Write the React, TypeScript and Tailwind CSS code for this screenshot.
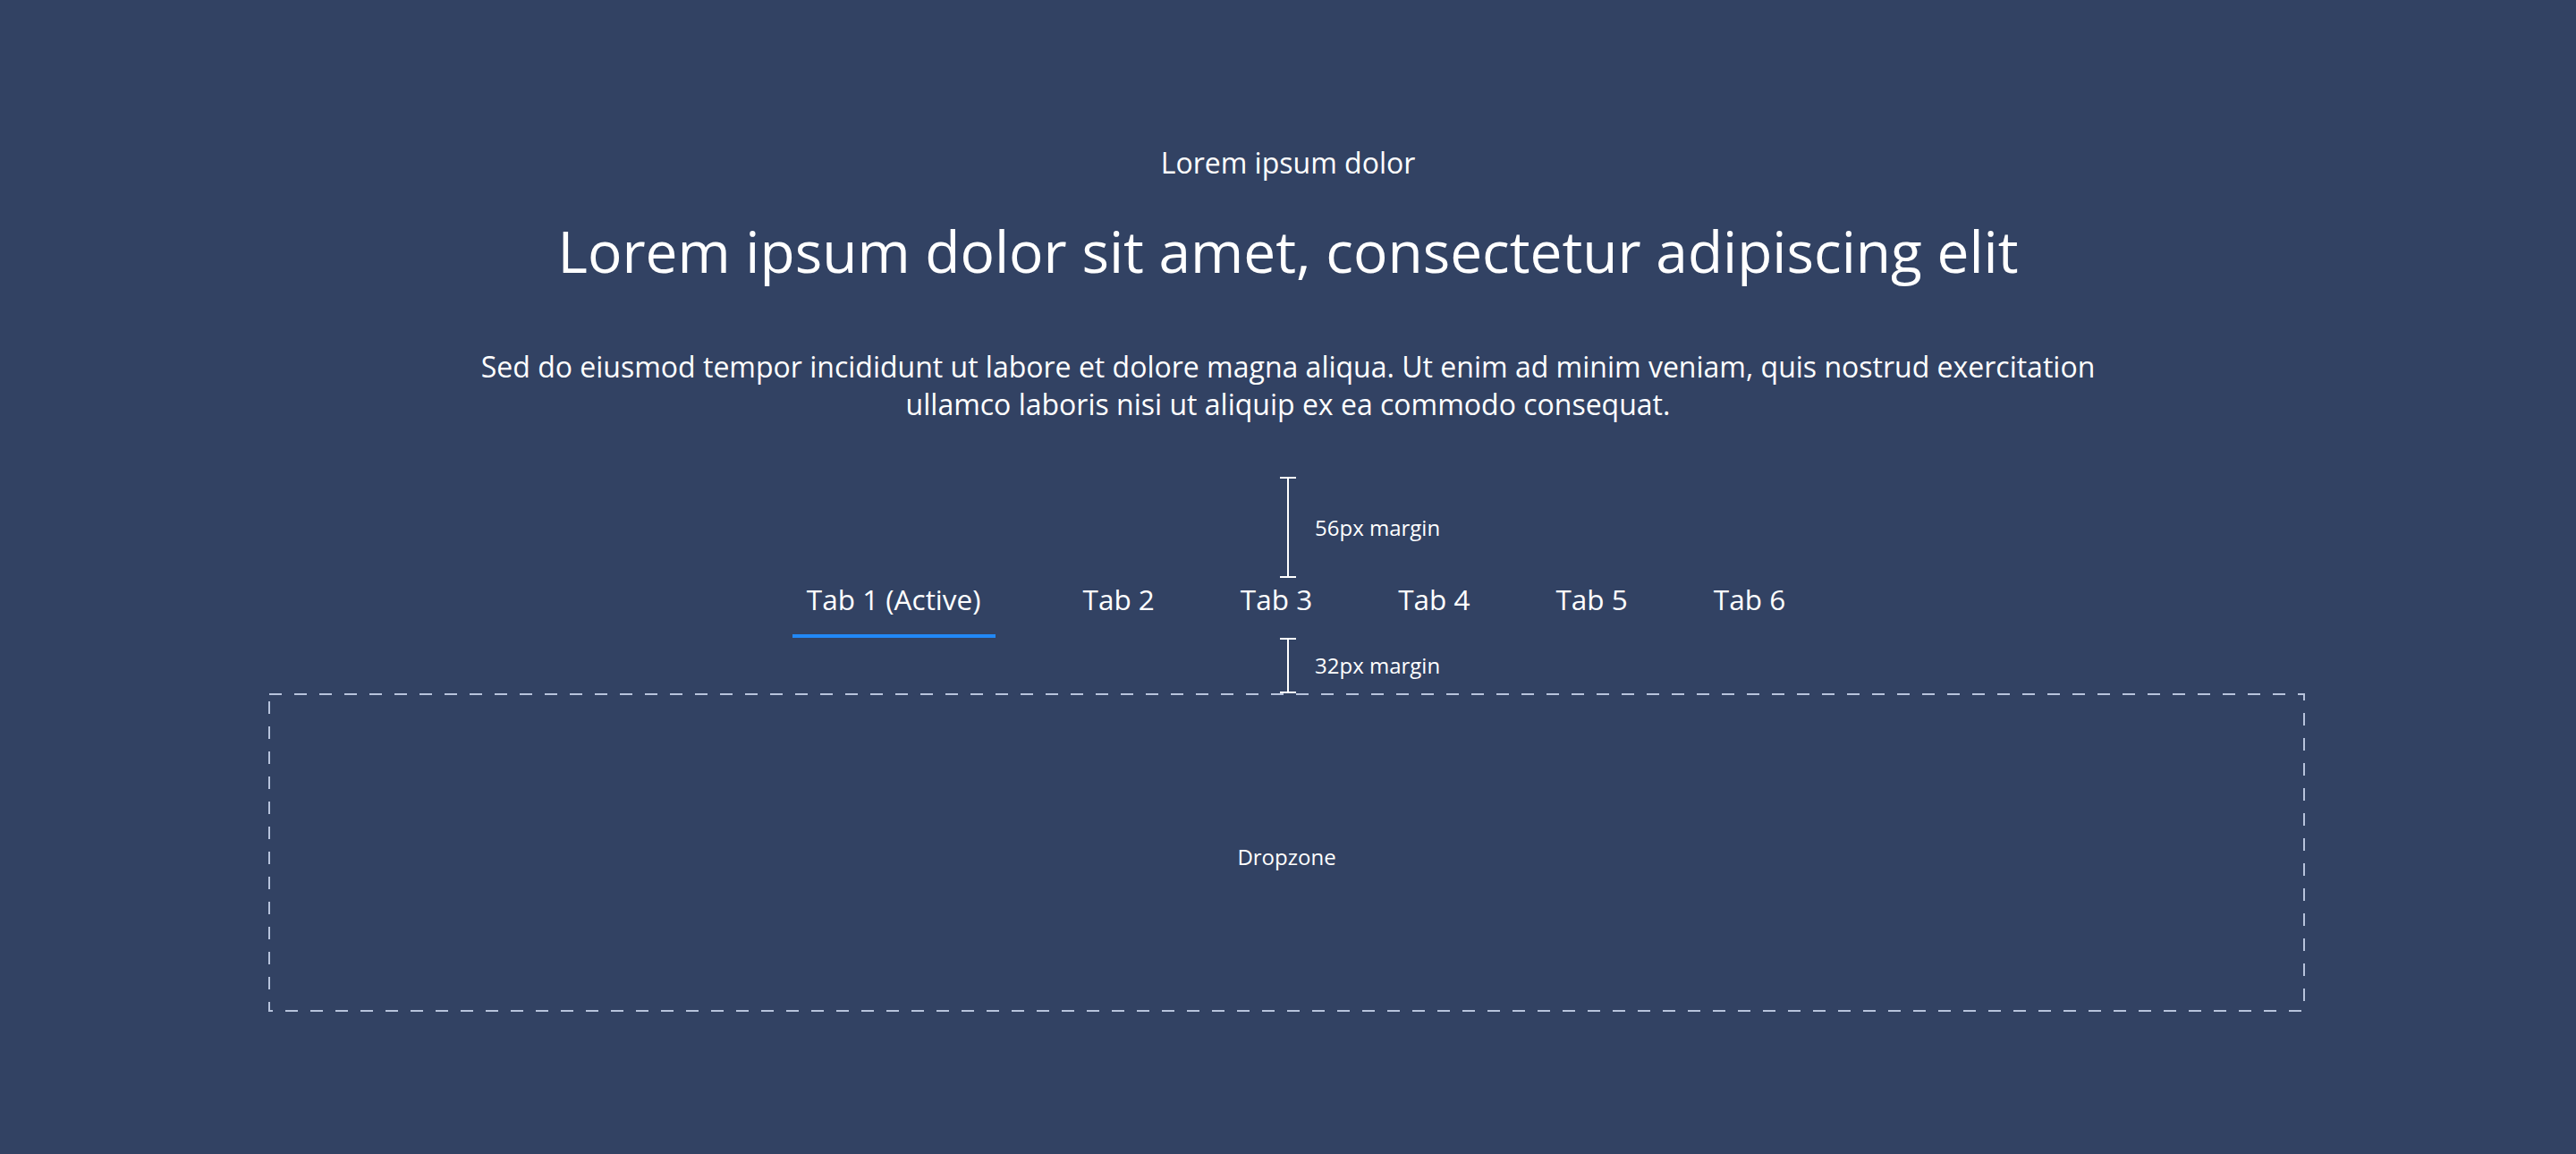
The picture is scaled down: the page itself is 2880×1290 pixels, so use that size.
import React from 'react';

const tabs = ['Tab 1 (Active)', 'Tab 2', 'Tab 3', 'Tab 4', 'Tab 5', 'Tab 6'];

// vertical spacing marker: a 2px line with short caps and a label on its right
const Spacer: React.FC<{ height: string; label: string }> = ({ height, label }) => (
  <div className={`relative mx-auto flex w-[18px] flex-col items-center ${height}`}>
    <div className="h-[2px] w-[18px] bg-white" />
    <div className="w-[2px] flex-1 bg-white" />
    <div className="h-[2px] w-[18px] bg-white" />
    <span className="absolute left-[39px] top-1/2 -translate-y-1/2 whitespace-nowrap text-[24px] leading-[32px] text-white">
      {label}
    </span>
  </div>
);

export default function App() {
  const [active, setActive] = React.useState(0);

  return (
    <div className="h-[1290px] overflow-hidden bg-[#324263] font-['Open_Sans',sans-serif] text-white">
      <div className="flex flex-col items-center pt-[158px] text-center">
        <p className="text-[32px] leading-[48px]">Lorem ipsum dolor</p>
        <h1 className="mt-[31px] text-[64px] font-normal leading-[88px]">
          Lorem ipsum dolor sit amet, consectetur adipiscing elit
        </h1>
        <p className="mt-[64px] max-w-[1840px] text-[32px] leading-[42px]">
          Sed do eiusmod tempor incididunt ut labore et dolore magna aliqua. Ut enim ad minim veniam, quis nostrud
          exercitation ullamco laboris nisi ut aliquip ex ea commodo consequat.
        </p>
      </div>

      <div className="mt-[60px]">
        <Spacer height="h-[113px]" label="56px margin" />
      </div>

      <div className="flex justify-center gap-[64px] pl-[18px]">
        {tabs.map((t, i) => (
          <button
            key={t}
            onClick={() => setActive(i)}
            className={`border-b-4 px-4 pb-[15px] text-[31.5px] leading-[48px] text-white ${
              i === active ? 'border-[#2188f6]' : 'border-transparent'
            } ${i === 0 ? 'mr-[18px]' : ''}`}
          >
            {t}
          </button>
        ))}
      </div>

      <Spacer height="h-[62px]" label="32px margin" />

      <div className="relative ml-[300px] flex h-[356px] w-[2277px] items-center justify-center">
        <svg className="absolute inset-0 h-full w-full" width="2277" height="356">
          <rect
            x="1"
            y="1"
            width="2275"
            height="354"
            fill="none"
            stroke="#b7c3dc"
            strokeWidth="2"
            strokeDasharray="14 14"
          />
        </svg>
        <span className="mt-[9px] text-[24px] leading-[32px] text-white">Dropzone</span>
      </div>
    </div>
  );
}
